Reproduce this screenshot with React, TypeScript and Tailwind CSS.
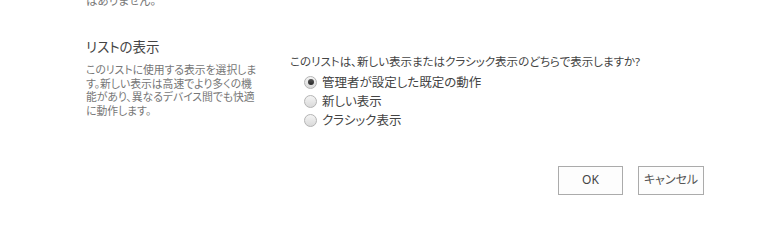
import React from "react"

const font = "font-['Noto_Sans','Noto_Sans_CJK_JP',sans-serif] [font-feature-settings:'palt']"

function Radio({ label, checked }: { label: string; checked?: boolean }) {
  return (
    <label className="flex h-[19px] items-center gap-[5px]">
      <span className="flex h-[13px] w-[13px] items-center justify-center rounded-full border border-[#b4b4b4] bg-gradient-to-b from-[#f4f4f4] to-[#dadada]">
        {checked && <span className="h-[6px] w-[6px] rounded-full bg-gradient-to-b from-[#555] to-[#2a2a2a]" />}
      </span>
      <span className="text-[12.5px] leading-[19px] text-[#444]">{label}</span>
    </label>
  )
}

export default function App() {
  return (
    <div className={`h-[221px] w-[772px] overflow-hidden bg-white ${font}`}>
      <div className="flex pl-[86px]">
        <div className="w-[204px]">
          <p className="mt-[-6px] text-[11.5px] leading-[14px] text-[#777]">はありません。</p>
          <h3 className="mt-[30px] text-[13.5px] leading-[18px] text-[#444]">リストの表示</h3>
          <p className="mt-[7px] whitespace-nowrap text-[10.8px] leading-[13.7px] text-[#777]">
            このリストに使用する表示を選択しま
            <br />
            す。新しい表示は高速でより多くの機
            <br />
            能があり、異なるデバイス間でも快適
            <br />
            に動作します。
          </p>
        </div>
        <div className="flex-1 pt-[54px]">
          <p className="text-[11.5px] leading-[16px] text-[#444]">
            このリストは、新しい表示またはクラシック表示のどちらで表示しますか?
          </p>
          <div className="mt-[2.5px] pl-[14px]">
            <Radio label="管理者が設定した既定の動作" checked />
            <Radio label="新しい表示" />
            <Radio label="クラシック表示" />
          </div>
        </div>
      </div>
      <div className="mt-[36px] flex justify-end gap-[15px] pr-[68px]">
        <button className="h-[29px] w-[65px] border border-[#ababab] bg-[#fdfdfd] text-[12px] text-[#444]">OK</button>
        <button className="h-[29px] w-[66px] border border-[#ababab] bg-[#fdfdfd] text-[12px] text-[#555]">キャンセル</button>
      </div>
    </div>
  )
}
